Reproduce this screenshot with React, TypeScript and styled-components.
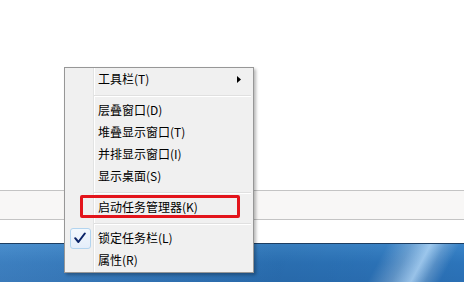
import React from "react";
import styled, { createGlobalStyle } from "styled-components";

const Global = createGlobalStyle`
  html, body { margin: 0; padding: 0; background: #fff; overflow: hidden; }
  body { font-family: "Noto Sans CJK SC", "Noto Sans", sans-serif; }
`;

const Desktop = styled.div`
  position: relative;
  width: 464px;
  height: 282px;
  display: flex;
  flex-direction: column;
`;

const WhiteArea = styled.div<{ $h: number }>`
  height: ${(p) => p.$h}px;
  background: #ffffff;
`;

const Band = styled.div`
  height: 28px;
  background: #f8f7f6;
  border-top: 1px solid #c4c4c4;
  border-bottom: 1px solid #c4c4c4;
`;

const Taskbar = styled.div`
  flex: 1;
  border-top: 1px solid #1d3e62;
  background:
    linear-gradient(118deg, transparent 80%, rgba(255, 255, 255, 0.25) 85%, rgba(200, 230, 255, 0.7) 89%, rgba(255, 255, 255, 0.2) 92%, transparent 95%),
    linear-gradient(90deg, rgba(255, 255, 255, 0.08) 0%, rgba(0, 0, 0, 0.06) 60%, rgba(0, 0, 0, 0) 100%),
    linear-gradient(180deg, #3a84c8 0%, #2c74ba 50%, #2a6fb4 100%);
`;

const Menu = styled.div`
  position: absolute;
  left: 64px;
  top: 67px;
  width: 190px;
  box-sizing: border-box;
  border: 1px solid #979797;
  background: #f0f0f0;
  padding: 0 0 1px 0;
  box-shadow: 2px 2px 3px rgba(0, 0, 0, 0.28);
  display: flex;
  flex-direction: column;

  &::before {
    content: "";
    position: absolute;
    left: 28px;
    top: 0;
    bottom: 0;
    width: 1px;
    background: #e2e3e3;
    box-shadow: 1px 0 0 #ffffff;
  }
`;

const Item = styled.div<{ $marked?: boolean }>`
  position: relative;
  height: 22px;
  display: grid;
  grid-template-columns: 28px 1fr auto;
  align-items: center;
  font-size: 12px;
  line-height: 22px;
  color: #000;
  padding-right: 12px;

  ${(p) =>
    p.$marked &&
    `
    &::after {
      content: "";
      position: absolute;
      left: 15px;
      top: -1px;
      width: 160px;
      height: 23px;
      box-sizing: border-box;
      border: 3px solid #e3141b;
      border-radius: 2px;
    }
  `}
`;

const IconCell = styled.div`
  display: flex;
  align-items: center;
  justify-content: center;
  height: 22px;
`;

const Label = styled.span`
  padding-left: 5px;
  white-space: nowrap;
`;

const CheckBox = styled.div`
  width: 21px;
  height: 21px;
  box-sizing: border-box;
  border: 1px solid #b2d4ef;
  border-radius: 3px;
  background: linear-gradient(180deg, #f3f8fd 0%, #e4eefa 100%);
  display: flex;
  align-items: center;
  justify-content: center;
  margin-left: 2px;
`;

const Separator = styled.div`
  height: 9px;
  position: relative;
  &::after {
    content: "";
    position: absolute;
    left: 29px;
    right: 2px;
    top: 5px;
    height: 1px;
    background: #e0e0e0;
    box-shadow: 0 1px 0 #ffffff;
  }
`;

const Arrow = () => (
  <svg width="4" height="7" viewBox="0 0 4 7">
    <path d="M0 0 L4 3.5 L0 7 Z" fill="#000" />
  </svg>
);

const Check = () => (
  <svg width="12" height="12" viewBox="0 0 12 12">
    <path d="M1.2 6.2 L4.4 10 L10.8 1.5" fill="none" stroke="#0b2468" strokeWidth="2" strokeLinecap="round" strokeLinejoin="round" />
  </svg>
);

export default function App() {
  return (
    <>
      <Global />
      <Desktop>
        <WhiteArea $h={190} />
        <Band />
        <WhiteArea $h={23} />
        <Taskbar />
        <Menu>
          <Item>
            <IconCell />
            <Label>工具栏(T)</Label>
            <Arrow />
          </Item>
          <Separator />
          <Item>
            <IconCell />
            <Label>层叠窗口(D)</Label>
          </Item>
          <Item>
            <IconCell />
            <Label>堆叠显示窗口(T)</Label>
          </Item>
          <Item>
            <IconCell />
            <Label>并排显示窗口(I)</Label>
          </Item>
          <Item>
            <IconCell />
            <Label>显示桌面(S)</Label>
          </Item>
          <Separator />
          <Item $marked>
            <IconCell />
            <Label>启动任务管理器(K)</Label>
          </Item>
          <Separator />
          <Item>
            <IconCell>
              <CheckBox>
                <Check />
              </CheckBox>
            </IconCell>
            <Label>锁定任务栏(L)</Label>
          </Item>
          <Item>
            <IconCell />
            <Label>属性(R)</Label>
          </Item>
        </Menu>
      </Desktop>
    </>
  );
}
